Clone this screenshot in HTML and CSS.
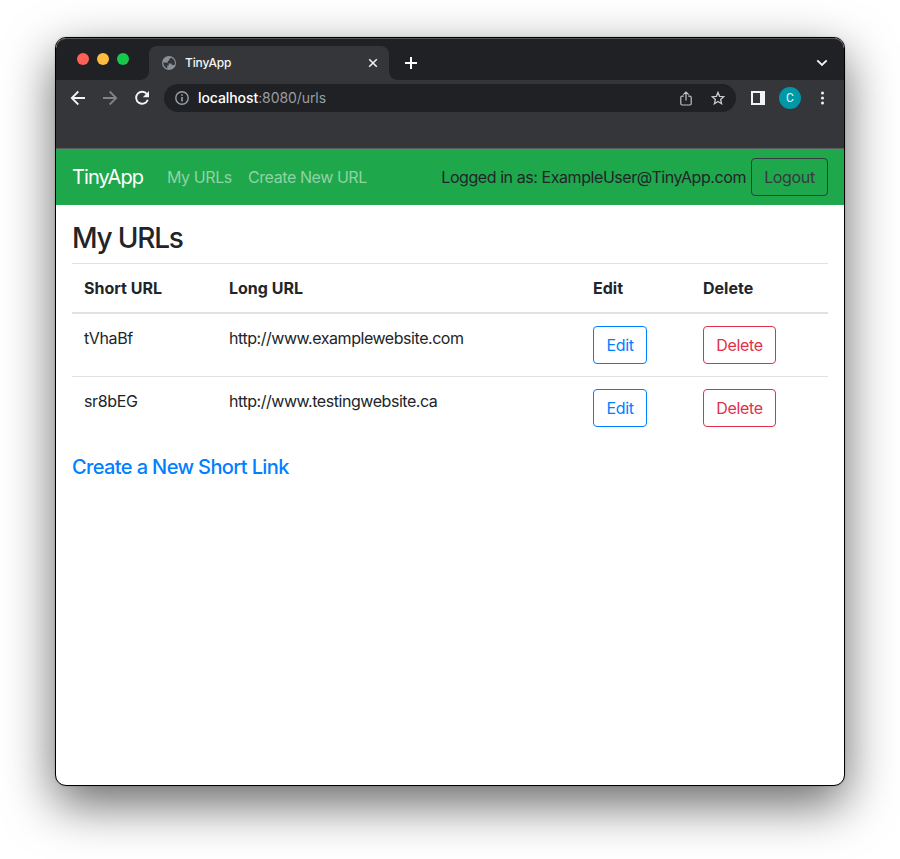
FILE: index.html
```html
<!DOCTYPE html>
<html lang="en">
<head>
<meta charset="utf-8">
<title>TinyApp</title>
<link rel="stylesheet" href="styles.css">
</head>
<body>
<div class="window">
  <div class="tabstrip">
    <div class="lights"><i class="light red"></i><i class="light yellow"></i><i class="light green"></i></div>
    <div class="tab">
      <svg class="globe" width="14" height="14" viewBox="0 0 14 14"><circle cx="7" cy="7" r="7" fill="#8b9198"/><path d="M1.200 6.600H4.500c1.400 0 2.300.8 2.300 2v.9H5.300v2.900C2.900 11.700 1.200 9.500 1.200 6.600zM9.300 1.700C11.600 2.600 12.900 4.700 12.900 7c0 .6-.1 1.200-.3 1.700-.4.300-.9.400-1.400.4-1.200 0-1.700-.8-1.700-1.700H7.300c-1.100 0-1.600-.7-1.600-1.500 0-1 .7-1.500 1.600-1.500V3.500c0-.8.800-1.200 2-1.800z" fill="#35363a"/></svg>
      <span class="tab-title">TinyApp</span>
      <svg class="tab-close" width="10" height="10" viewBox="0 0 10 10"><path d="M1.200 1.200 8.800 8.800M8.800 1.200 1.200 8.800" stroke="#f1f3f4" stroke-width="1.500"/></svg>
    </div>
    <svg class="new-tab" width="12" height="12" viewBox="0 0 12 12"><path d="M6 0v12M0 6h12" stroke="#fff" stroke-width="2"/></svg>
    <svg class="chevron" width="12" height="8" viewBox="0 0 12 8"><path d="m1.300 1.300 4.700 4.700 4.700-4.700" fill="none" stroke="#f1f3f4" stroke-width="1.900"/></svg>
  </div>
  <div class="toolbar">
    <svg class="nav-icon" width="16" height="16" viewBox="0 0 16 16" fill="none" stroke="#f1f3f4" stroke-width="1.800"><path d="M15 8H2M8.300 1.500 1.800 8l6.500 6.500"/></svg>
    <svg class="nav-icon" width="16" height="16" viewBox="0 0 16 16" fill="none" stroke="#828387" stroke-width="1.800"><path d="M1 8h13M7.700 1.500 14.200 8l-6.500 6.500"/></svg>
    <svg class="nav-icon" width="16" height="16" viewBox="0 0 16 16"><path d="M13 4.200A6 6 0 1 0 13.800 9.700" fill="none" stroke="#f1f3f4" stroke-width="1.900"/><path d="M15 1v6.200H8.800z" fill="#f1f3f4"/></svg>
    <div class="omnibox">
      <svg width="14" height="14" viewBox="0 0 14 14"><circle cx="7" cy="7" r="6.200" fill="none" stroke="#9aa0a6" stroke-width="1.400"/><path d="M7 6v4.500M7 3.300v1.500" stroke="#9aa0a6" stroke-width="1.600"/></svg>
      <span class="address"><b>localhost</b>:8080/urls</span>
      <svg class="share" width="12" height="15" viewBox="0 0 12 15" fill="none" stroke="#c0c2c5" stroke-width="1.200"><path d="M3.800 5.200H2A1.200 1.200 0 0 0 .8 6.400v6.400A1.200 1.200 0 0 0 2 14h8a1.200 1.200 0 0 0 1.200-1.200V6.400A1.200 1.200 0 0 0 10 5.200H8.200M6 9.500V1.200M3.300 3.700 6 1l2.700 2.700"/></svg>
      <svg width="14" height="14" viewBox="0 0 14 14" fill="none" stroke="#c9cbce" stroke-width="1.300"><path d="m7 1.400 1.600 3.900 4.200.4-3.200 2.800 1 4.200L7 10.500l-3.600 2.200 1-4.200L1.200 5.700l4.200-.4z"/></svg>
    </div>
    <svg class="panel" width="14" height="14" viewBox="0 0 14 14"><path fill="#f1f3f4" fill-rule="evenodd" d="M0 0h14v14H0zM2 2v10h7V2z"/></svg>
    <span class="avatar">C</span>
    <svg class="more" width="4" height="14" viewBox="0 0 4 14" fill="#f1f3f4"><circle cx="2.500" cy="2" r="1.500"/><circle cx="2.500" cy="7" r="1.500"/><circle cx="2.500" cy="12" r="1.500"/></svg>
  </div>
  <nav class="navbar">
    <a class="brand">TinyApp</a>
    <a class="nav-link">My URLs</a>
    <a class="nav-link create">Create New URL</a>
    <span class="user">Logged in as: ExampleUser@TinyApp.com</span>
    <button class="btn logout">Logout</button>
  </nav>
  <main>
    <h3>My URLs</h3>
    <table>
      <colgroup><col class="c-short"><col class="c-long"><col class="c-edit"><col></colgroup>
      <thead><tr><th>Short URL</th><th>Long URL</th><th>Edit</th><th>Delete</th></tr></thead>
      <tbody>
        <tr><td>tVhaBf</td><td class="long">http://www.examplewebsite.com</td><td><button class="btn edit">Edit</button></td><td><button class="btn delete">Delete</button></td></tr>
        <tr><td>sr8bEG</td><td class="long">http://www.testingwebsite.ca</td><td><button class="btn edit">Edit</button></td><td><button class="btn delete">Delete</button></td></tr>
      </tbody>
    </table>
    <h5>Create a New Short Link</h5>
  </main>
</div>
</body>
</html>
```
FILE: styles.css
```css
* { box-sizing: border-box; }
body {
  margin: 0;
  height: 859px;
  overflow: hidden;
  padding: 37px 55px;
  background: #fff;
  color: #212529;
  font: 16px/24px Inter, "Liberation Sans", sans-serif;
  letter-spacing: -0.35px;
}
svg { display: block; flex: none; }
.window {
  width: 790px;
  height: 749px;
  border: 1px solid #000;
  border-radius: 11px;
  background: #fff;
  overflow: hidden;
  box-shadow: 0 18px 50px rgba(0, 0, 0, .6), 0 0 2px rgba(0, 0, 0, .2);
}
.tabstrip {
  display: flex;
  height: 42px;
  background: #202124;
  box-shadow: inset 0 1px #55575a;
  border-radius: 10px 10px 0 0;
}
.lights { display: flex; gap: 8px; width: 93px; padding: 15px 0 0 21px; }
.light { width: 12px; height: 12px; border-radius: 50%; }
.red { background: #ff5f57; }
.yellow { background: #febc40; }
.green { background: #18c84b; }
.tab {
  position: relative;
  display: flex;
  align-items: center;
  width: 240px;
  height: 34px;
  margin-top: 8px;
  padding: 0 11px 0 13px;
  border-radius: 8px 8px 0 0;
  background: #35363a;
}
.tab::before, .tab::after {
  content: "";
  position: absolute;
  bottom: 0;
  width: 8px;
  height: 8px;
}
.tab::before { left: -8px; background: radial-gradient(circle at 0 0, transparent 7.5px, #35363a 8px); }
.tab::after { right: -8px; background: radial-gradient(circle at 100% 0, transparent 7.5px, #35363a 8px); }
.tab-title { flex: 1; margin-left: 9px; color: #f5f6f7; font-size: 12px; font-weight: 500; letter-spacing: -0.15px; }
.new-tab { margin: 19px 0 0 16px; }
.chevron { margin: 21px 16px 0 auto; }
.toolbar {
  display: flex;
  align-items: flex-start;
  height: 69px;
  padding: 4px 20px 0 14px;
  background: #35363a;
  border-bottom: 1px solid #5b5d60;
}
.nav-icon { margin: 6px 16px 0 0; }
.omnibox {
  display: flex;
  align-items: center;
  width: 572px;
  height: 28px;
  margin-left: -2px;
  padding: 0 11px;
  border-radius: 14px;
  background: #202124;
}
.address { flex: 1; margin-left: 9px; color: #9a9da1; font-size: 14px; letter-spacing: -0.08px; }
.address b { color: #fff; font-weight: 500; }
.share { margin-right: 19px; }
.panel { margin: 7px 14px 0 15px; }
.avatar {
  width: 22px;
  height: 22px;
  margin: 3px 0 0;
  border-radius: 50%;
  background: #0097a7;
  color: #e4f5f6;
  font: 12px/22px Roboto, sans-serif;
  letter-spacing: 0;
  text-align: center;
}
.more { margin: 7px 0 0 auto; }
.navbar {
  display: flex;
  align-items: center;
  height: 56px;
  padding: 0 16px;
  background: #1fa74c;
}
.brand { width: 95px; color: #fff; font-size: 20px; letter-spacing: -0.9px; }
.nav-link { width: 81px; color: #8fd3a5; letter-spacing: -0.42px; }
.create { width: auto; }
.user { margin-left: auto; margin-right: 5px; letter-spacing: -0.43px; }
.btn {
  height: 38px;
  padding: 0;
  border: 1px solid;
  border-radius: 4px;
  background: transparent;
  font: inherit;
  letter-spacing: inherit;
  display: block;
}
.logout { width: 77px; color: #343a40; }
.edit { width: 54px; color: #0080ff; }
.delete { width: 73px; color: #e0304a; }
main { padding: 16px 16px 0; }
h3 { margin: 0 0 8px; font-size: 28px; line-height: 34px; font-weight: 500; letter-spacing: -1.2px; }
table { width: 756px; table-layout: fixed; border-collapse: separate; border-spacing: 0; }
.c-short { width: 145px; }
.c-long { width: 364px; }
.c-edit { width: 110px; }
th, td { padding: 12px; text-align: left; vertical-align: top; }
th { border-top: 1px solid #dee2e6; border-bottom: 2px solid #dee2e6; font-weight: 700; letter-spacing: 0; }
.long { letter-spacing: -0.45px; }
tr + tr td { border-top: 1px solid #dee2e6; }
h5 { margin: 16px 0 0; color: #0080ff; font-size: 20px; line-height: 24px; font-weight: 500; letter-spacing: -0.62px; }
```
